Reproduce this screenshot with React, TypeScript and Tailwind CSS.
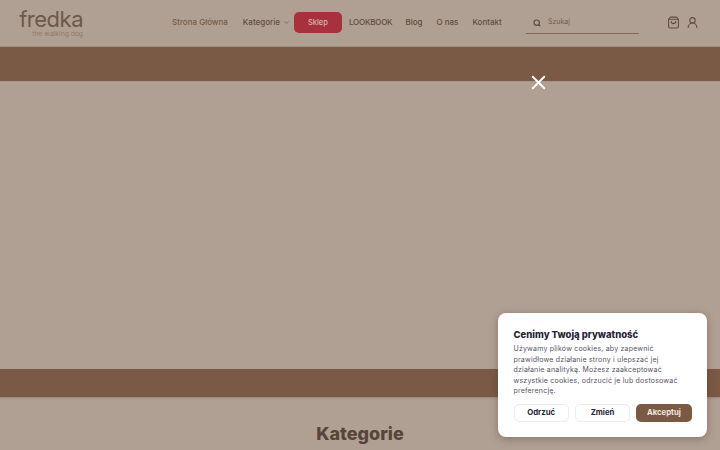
import { Search, ChevronDown, ShoppingBag, UserRound, X } from "lucide-react";

const body = "font-['Inter','Liberation_Sans',sans-serif]";

function NavLink({ children, className = "" }: { children: React.ReactNode; className?: string }) {
  return <a className={`px-[7px] text-[8px] font-medium text-[#5f4c40] ${className}`}>{children}</a>;
}

export default function App() {
  return (
    <div className={`relative flex h-[450px] w-[720px] flex-col overflow-hidden bg-[#b0a093] ${body}`}>
      <header className="flex h-[47px] shrink-0 items-center border-b border-[#a48f80]">
        <div className="ml-[19px] flex w-[64px] flex-col items-end">
          <span className="text-[22px] leading-[18px] font-normal tracking-[-0.5px] text-[#6f5848]">fredka</span>
          <span className="mt-[2px] text-[6.75px] leading-[7px] text-[#8f7866]">the walking dog</span>
        </div>
        <nav className="ml-[82px] mb-[2px] flex items-center">
          <NavLink className="pr-[8px] text-[#7a5a44]">Strona Główna</NavLink>
          <div className="flex items-center">
            <NavLink className="pr-[3px]">Kategorie</NavLink>
            <ChevronDown size={7} strokeWidth={2.2} className="mr-[4px] text-[#5f4c40]" />
          </div>
          <a className="flex h-[21px] w-[48px] items-center justify-center rounded-[5px] bg-[#a9303d] pt-[1px] text-[7.5px] font-medium text-[#d8b8ae]">Sklep</a>
          <NavLink className="tracking-[-0.2px]">LOOKBOOK</NavLink>
          <NavLink className="pl-[6px]">Blog</NavLink>
          <NavLink>O nas</NavLink>
          <NavLink>Kontakt</NavLink>
        </nav>
        <div className="ml-auto mr-[81px] flex h-[34px] w-[113px] items-center gap-[7px] self-start border-b border-[#80695a] pt-[12px] pl-[7px]">
          <Search size={8} strokeWidth={3.5} className="text-[#5f4c40]" />
          <span className="text-[7px] text-[#6f5c4f]">Szukaj</span>
        </div>
      </header>

      <div className="absolute left-[667px] top-[16px] flex items-center gap-[6px] text-[#5f4c40]">
        <ShoppingBag size={13} strokeWidth={2} />
        <UserRound size={13} strokeWidth={2} />
      </div>

      <div className="h-[34px] shrink-0 bg-[#7a5a44]" />
      <main className="h-[288px] shrink-0 border-t border-[#a8978a]" />
      <div className="h-[28px] shrink-0 bg-[#7a5a44] shadow-[0_1px_2px_rgba(90,70,55,0.3)]" />
      <section className="flex flex-1 justify-center pt-[26px]">
        <h2 className="text-[18px] leading-[22px] font-extrabold text-[#56453a]">Kategorie</h2>
      </section>

      <X size={23} strokeWidth={2} className="absolute left-[527px] top-[71px] text-white" />

      <aside className="absolute left-[498px] top-[313px] flex h-[124px] w-[209px] flex-col rounded-[8px] bg-white px-[15.5px] pt-[15px] shadow-[0_2px_8px_rgba(60,40,30,0.35)]">
        <h3 className="text-[9.5px] leading-[13px] font-extrabold text-[#252538]">Cenimy Twoją prywatność</h3>
        <p className="mt-[3px] w-[175px] text-[7px] leading-[10.5px] tracking-[0.2px] text-[#55555f]">
          Używamy plików cookies, aby zapewnić prawidłowe działanie strony i ulepszać jej działanie analityką. Możesz zaakceptować wszystkie cookies, odrzucić je lub dostosować preferencję.
        </p>
        <div className="mt-[7.5px] flex gap-[6px]">
          <button className="h-[18px] w-[56px] rounded-[5px] border border-[#ececec] text-[7.75px] font-bold text-[#252538]">Odrzuć</button>
          <button className="h-[18px] w-[56px] rounded-[5px] border border-[#ececec] text-[7.75px] font-bold text-[#252538]">Zmień</button>
          <button className="h-[18px] w-[56px] rounded-[5px] bg-[#7a5a44] text-[7.75px] font-bold text-[#f0e6de]">Akceptuj</button>
        </div>
      </aside>
    </div>
  );
}
